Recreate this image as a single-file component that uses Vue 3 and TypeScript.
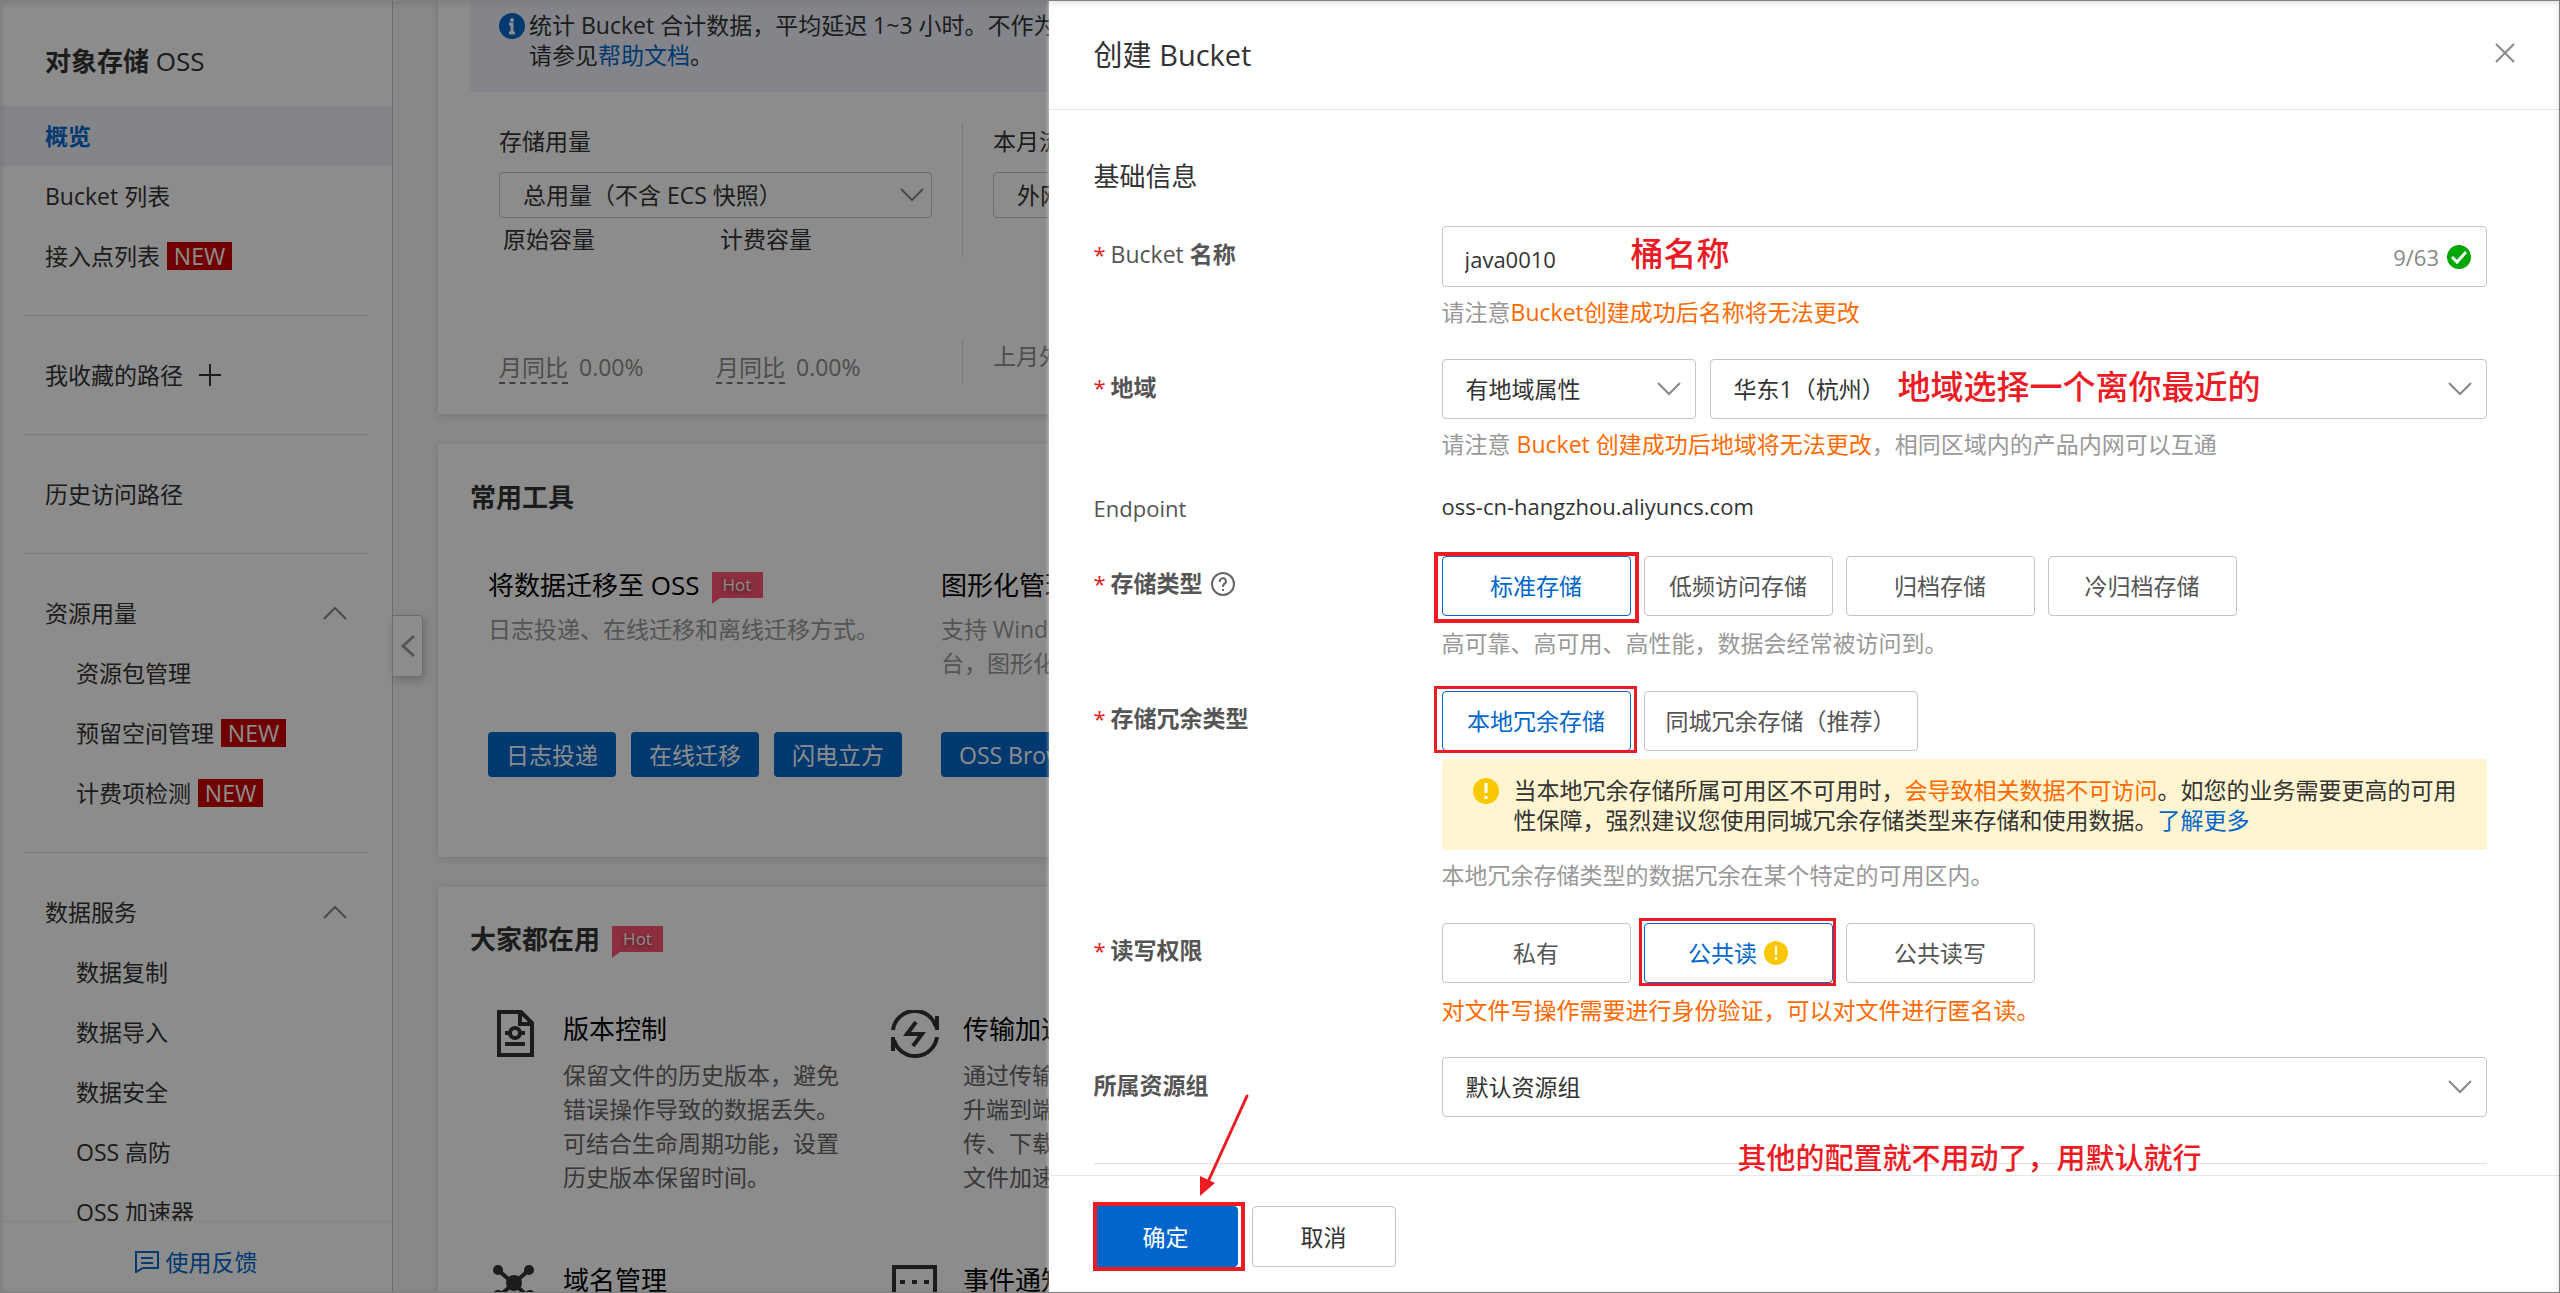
<script setup lang="ts">
import { ref } from 'vue'

interface NavItem {
  text: string
  isNew?: boolean
}
interface NavGroup {
  title: string
  items: NavItem[]
}
interface Feature {
  icon: 'version' | 'transfer' | 'domain' | 'event'
  title: string
  lines: string[]
}

const groups: NavGroup[] = [
  {
    title: '资源用量',
    items: [
      { text: '资源包管理' },
      { text: '预留空间管理', isNew: true },
      { text: '计费项检测', isNew: true },
    ],
  },
  {
    title: '数据服务',
    items: [
      { text: '数据复制' },
      { text: '数据导入' },
      { text: '数据安全' },
      { text: 'OSS 高防' },
      { text: 'OSS 加速器' },
    ],
  },
]

const features: Feature[] = [
  {
    icon: 'version',
    title: '版本控制',
    lines: ['保留文件的历史版本，避免', '错误操作导致的数据丢失。', '可结合生命周期功能，设置', '历史版本保留时间。'],
  },
  {
    icon: 'transfer',
    title: '传输加速',
    lines: ['通过传输', '升端到端', '传、下载', '文件加速'],
  },
  { icon: 'domain', title: '域名管理', lines: [] },
  { icon: 'event', title: '事件通知', lines: [] },
]

const storageTypes = ['标准存储', '低频访问存储', '归档存储', '冷归档存储']
const redundancyTypes = ['本地冗余存储', '同城冗余存储（推荐）']
const aclTypes = ['私有', '公共读', '公共读写']

const bucketName = ref('java0010')
const storage = ref('标准存储')
const redundancy = ref('本地冗余存储')
const acl = ref('公共读')
</script>

<template>
  <div class="page">
    <div class="console">
      <aside class="sidebar">
        <nav class="nav">
          <h1 class="nav-title"><b>对象存储</b> OSS</h1>
          <a class="nav-row active" href="#">概览</a>
          <a class="nav-row" href="#">Bucket 列表</a>
          <a class="nav-row" href="#">接入点列表<span class="new">NEW</span></a>
          <hr class="nav-line" />
          <a class="nav-row" href="#">
            我收藏的路径
            <svg class="plus" width="22" height="22" viewBox="0 0 22 22">
              <path d="M11 0V22M0 11H22" stroke="#333" stroke-width="2" fill="none" />
            </svg>
          </a>
          <hr class="nav-line" />
          <a class="nav-row" href="#">历史访问路径</a>
          <template v-for="group in groups" :key="group.title">
            <hr class="nav-line" />
            <a class="nav-row" href="#">
              {{ group.title }}
              <svg class="fold" width="24" height="14" viewBox="0 0 24 14">
                <path d="M1 13L12 2L23 13" stroke="#888" stroke-width="2" fill="none" />
              </svg>
            </a>
            <a v-for="item in group.items" :key="item.text" class="nav-row child" href="#">
              {{ item.text }}<span v-if="item.isNew" class="new">NEW</span>
            </a>
          </template>
        </nav>
        <a class="feedback" href="#">
          <svg width="24" height="22" viewBox="0 0 24 22">
            <path d="M1 1H23V17H8L1 21Z" stroke="#06c" stroke-width="2" fill="none" />
            <path d="M6 7H18M6 12H18" stroke="#06c" stroke-width="2" fill="none" />
          </svg>
          使用反馈
        </a>
        <button class="collapse" type="button" aria-label="收起">
          <svg width="16" height="24" viewBox="0 0 16 24">
            <path d="M14 2L3 12L14 22" stroke="#999" stroke-width="3" fill="none" />
          </svg>
        </button>
      </aside>

      <main class="main">
        <section class="card card-usage">
          <div class="info">
            <svg class="info-icon" width="26" height="26" viewBox="0 0 26 26">
              <circle cx="13" cy="13" r="13" fill="#06c" />
              <circle cx="13" cy="7" r="2" fill="#fff" />
              <path d="M10 11H13V20M10 20H16" stroke="#fff" stroke-width="3" fill="none" />
            </svg>
            <p>
              统计 Bucket 合计数据，平均延迟 1~3 小时。不作为<br />请参见<a href="#">帮助文档</a>。
            </p>
          </div>
          <div class="usage">
            <div class="usage-col">
              <div class="usage-top">
                <label for="usage-type">存储用量</label>
                <div class="select small">
                  <select id="usage-type"><option>总用量（不含 ECS 快照）</option></select>
                  <svg width="24" height="14" viewBox="0 0 24 14">
                    <path d="M1 1L12 12L23 1" stroke="#888" stroke-width="2" fill="none" />
                  </svg>
                </div>
                <div class="caps"><span>原始容量</span><span>计费容量</span></div>
              </div>
              <div class="usage-foot">
                <span><u>月同比</u>0.00%</span>
                <span><u>月同比</u>0.00%</span>
              </div>
            </div>
            <div class="usage-col second">
              <div class="usage-top">
                <label for="flow-type">本月流量</label>
                <div class="select small">
                  <select id="flow-type"><option>外网</option></select>
                </div>
              </div>
              <div class="usage-foot">上月外网</div>
            </div>
          </div>
        </section>

        <section class="card card-tools">
          <h2>常用工具</h2>
          <div class="tools">
            <div class="tool">
              <h3>将数据迁移至 OSS <span class="hot">Hot</span></h3>
              <p>日志投递、在线迁移和离线迁移方式。</p>
              <div class="tool-actions">
                <button type="button">日志投递</button>
                <button type="button">在线迁移</button>
                <button type="button">闪电立方</button>
              </div>
            </div>
            <div class="tool">
              <h3>图形化管理</h3>
              <p>支持 Windows<br />台，图形化</p>
              <div class="tool-actions">
                <button type="button">OSS Browser</button>
              </div>
            </div>
          </div>
        </section>

        <section class="card card-popular">
          <h2>大家都在用 <span class="hot">Hot</span></h2>
          <div class="features">
            <div v-for="f in features" :key="f.title" class="feature">
              <svg class="feature-icon" width="48" height="48" viewBox="0 0 48 48" fill="none" stroke="#333" stroke-width="4">
                <template v-if="f.icon === 'version'">
                  <path d="M8 2H30L41 13V45H8Z" />
                  <path d="M29 2V14H41" />
                  <circle cx="24" cy="23" r="5" />
                  <path d="M14 23H19M29 23H34M14 34H34" />
                </template>
                <template v-else-if="f.icon === 'transfer'">
                  <path d="M2 20A22 22 0 0 1 45 17" />
                  <path d="M46 6V20" />
                  <path d="M46 27A22 22 0 0 1 3 30" />
                  <path d="M2 27V41" />
                  <path d="M25 12L16 24H31L22 36" />
                </template>
                <template v-else-if="f.icon === 'domain'">
                  <path d="M7 9L38 36M38 9L7 36" />
                  <g fill="#333" stroke="none">
                    <circle cx="23" cy="22" r="8" />
                    <circle cx="7" cy="9" r="5" />
                    <circle cx="38" cy="9" r="5" />
                    <circle cx="7" cy="34" r="5" />
                    <circle cx="39" cy="34" r="5" />
                  </g>
                </template>
                <template v-else>
                  <path d="M3 6H44V44H3Z" />
                  <path d="M9 21H14M21 21H26M33 21H38" />
                </template>
              </svg>
              <div class="feature-text">
                <h3>{{ f.title }}</h3>
                <p v-if="f.lines.length">
                  <span v-for="line in f.lines" :key="line">{{ line }}</span>
                </p>
              </div>
            </div>
          </div>
        </section>
      </main>
    </div>

    <div class="overlay"></div>

    <form class="drawer" @submit.prevent>
      <header class="drawer-head">
        <h2>创建 Bucket</h2>
        <button type="button" class="close" aria-label="关闭">
          <svg width="22" height="22" viewBox="0 0 22 22">
            <path d="M2 2L20 20M20 2L2 20" stroke="#888" stroke-width="2" fill="none" />
          </svg>
        </button>
      </header>

      <div class="drawer-body">
        <h3>基础信息</h3>

        <div class="row">
          <label class="label" for="bucket"><i>*</i>Bucket <b>名称</b></label>
          <div class="field">
            <div class="textbox">
              <input id="bucket" v-model="bucketName" type="text" />
              <span class="count">9/63</span>
              <svg width="24" height="24" viewBox="0 0 24 24">
                <circle cx="12" cy="12" r="12" fill="#00a700" />
                <path d="M5 12L10 17L19 7" stroke="#fff" stroke-width="3" fill="none" />
              </svg>
              <span class="note note-name">桶名称</span>
            </div>
            <p class="help">请注意<em>Bucket创建成功后名称将无法更改</em></p>
          </div>
        </div>

        <div class="row">
          <label class="label" for="region"><i>*</i><b>地域</b></label>
          <div class="field">
            <div class="pair">
              <div class="select narrow">
                <select aria-label="地域属性"><option>有地域属性</option></select>
                <svg width="24" height="14" viewBox="0 0 24 14">
                  <path d="M1 1L12 12L23 1" stroke="#888" stroke-width="2" fill="none" />
                </svg>
              </div>
              <div class="select wide">
                <select id="region"><option>华东1（杭州）</option></select>
                <svg width="24" height="14" viewBox="0 0 24 14">
                  <path d="M1 1L12 12L23 1" stroke="#888" stroke-width="2" fill="none" />
                </svg>
                <span class="note note-region">地域选择一个离你最近的</span>
              </div>
            </div>
            <p class="help">请注意 <em>Bucket 创建成功后地域将无法更改</em>，相同区域内的产品内网可以互通</p>
          </div>
        </div>

        <div class="row plain">
          <span class="label">Endpoint</span>
          <div class="field value">oss-cn-hangzhou.aliyuncs.com</div>
        </div>

        <div class="row" role="radiogroup" aria-labelledby="storage-label">
          <span id="storage-label" class="label">
            <i>*</i><b>存储类型</b>
            <svg class="question" width="24" height="24" viewBox="0 0 24 24" fill="none" stroke="#666">
              <circle cx="12" cy="12" r="11" stroke-width="2" />
              <path d="M9 10A3 3 0 1 1 13 12Q12 13 12 15" stroke-width="2" />
              <path d="M12 17V19" stroke-width="2" />
            </svg>
          </span>
          <div class="field">
            <div class="segments">
              <label v-for="s in storageTypes" :key="s" class="segment" :class="{ on: storage === s }">
                <input v-model="storage" type="radio" name="storage" :value="s" />{{ s }}
                <span v-if="s === '标准存储'" class="mark mark-storage"></span>
              </label>
            </div>
            <p class="help">高可靠、高可用、高性能，数据会经常被访问到。</p>
          </div>
        </div>

        <div class="row" role="radiogroup" aria-labelledby="redundancy-label">
          <span id="redundancy-label" class="label"><i>*</i><b>存储冗余类型</b></span>
          <div class="field">
            <div class="segments">
              <label v-for="r in redundancyTypes" :key="r" class="segment" :class="{ on: redundancy === r }">
                <input v-model="redundancy" type="radio" name="redundancy" :value="r" />{{ r }}
                <span v-if="r === '本地冗余存储'" class="mark mark-redundancy"></span>
              </label>
            </div>
            <div class="alert">
              <svg width="28" height="28" viewBox="0 0 28 28">
                <circle cx="14" cy="14" r="13" fill="#fac800" />
                <path d="M14 6V16M14 19V22" stroke="#fff" stroke-width="3" fill="none" />
              </svg>
              <p>
                当本地冗余存储所属可用区不可用时，<em>会导致相关数据不可访问</em>。如您的业务需要更高的可用性保障，强烈建议您使用同城冗余存储类型来存储和使用数据。<a href="#">了解更多</a>
              </p>
            </div>
            <p class="help">本地冗余存储类型的数据冗余在某个特定的可用区内。</p>
          </div>
        </div>

        <div class="row" role="radiogroup" aria-labelledby="acl-label">
          <span id="acl-label" class="label"><i>*</i><b>读写权限</b></span>
          <div class="field">
            <div class="segments">
              <label v-for="a in aclTypes" :key="a" class="segment" :class="{ on: acl === a }">
                <input v-model="acl" type="radio" name="acl" :value="a" />{{ a }}
                <svg v-if="a === '公共读'" class="warn" width="24" height="24" viewBox="0 0 24 24">
                  <circle cx="12" cy="12" r="12" fill="#fac800" />
                  <path d="M12 5V14M12 16V19" stroke="#fff" stroke-width="2" fill="none" />
                </svg>
                <span v-if="a === '公共读'" class="mark mark-acl"></span>
              </label>
            </div>
            <p class="help"><em>对文件写操作需要进行身份验证，可以对文件进行匿名读。</em></p>
          </div>
        </div>

        <div class="row">
          <label class="label" for="group"><b>所属资源组</b></label>
          <div class="field">
            <div class="select">
              <select id="group"><option>默认资源组</option></select>
              <svg width="24" height="14" viewBox="0 0 24 14">
                <path d="M1 1L12 12L23 1" stroke="#888" stroke-width="2" fill="none" />
              </svg>
            </div>
          </div>
        </div>
        <hr class="body-line" />
      </div>

      <footer class="drawer-foot">
        <span class="confirm-wrap">
          <button type="submit" class="confirm">确定</button>
          <span class="mark mark-confirm"></span>
          <svg class="arrow" width="52" height="104" viewBox="0 0 52 104">
            <path d="M50 2L10 90" stroke="#ed1c24" stroke-width="3" stroke-linecap="round" fill="none" />
            <path d="M3 102L3 82L18 89Z" fill="#ed1c24" />
          </svg>
        </span>
        <button type="button" class="cancel">取消</button>
        <span class="note note-rest">其他的配置就不用动了，用默认就行</span>
      </footer>
    </form>

    <div class="frame"></div>
  </div>
</template>

<style>
body {
  margin: 0;
}
</style>

<style scoped>
* {
  box-sizing: border-box;
}
.page {
  position: relative;
  height: 100vh;
  overflow: hidden;
  color: #333;
  font-family: 'Open Sans', 'Noto Sans CJK SC', sans-serif;
  font-size: 23px;
  line-height: 30px;
}
h1,
h2,
h3,
p {
  margin: 0;
  font-size: 23px;
  font-weight: 400;
}
a {
  color: #06c;
  text-decoration: none;
}
em,
i {
  font-style: normal;
}
em {
  color: #ff6a00;
}
svg {
  display: block;
  flex: none;
}
button,
input,
select {
  font: inherit;
  color: inherit;
  margin: 0;
}
.console {
  display: flex;
  height: 100%;
  background: #f7f7f7;
}

/* Sidebar */
.sidebar {
  position: relative;
  display: flex;
  flex: none;
  flex-direction: column;
  width: 393px;
  background: #fff;
  border-right: 1px solid #c4c6c8;
}
.nav {
  flex: 1;
  min-height: 0;
  overflow: hidden;
}
.nav-title {
  padding: 16px 45px 0;
  font-size: 26px;
  line-height: 90px;
}
.nav-row {
  display: flex;
  align-items: center;
  height: 60px;
  padding: 0 45px;
  color: #333;
}
.nav-row.active {
  color: #06c;
  font-weight: 700;
  background: #eff3f8;
}
.nav-row.child {
  padding-left: 76px;
}
.nav-line {
  height: 1px;
  margin: 29px 23px;
  border: 0;
  background: #dedede;
}
.new {
  width: 65px;
  margin-left: 7px;
  color: #fff;
  line-height: 28px;
  text-align: center;
  background: #c00;
}
.plus {
  margin-left: 16px;
}
.fold {
  margin-left: auto;
}
.feedback {
  display: flex;
  align-items: center;
  justify-content: center;
  gap: 7px;
  height: 72px;
  padding-top: 8px;
  border-top: 1px solid #f0f0f0;
}
.collapse {
  position: absolute;
  top: 615px;
  left: 100%;
  display: flex;
  align-items: center;
  justify-content: center;
  width: 31px;
  height: 62px;
  padding: 0;
  background: #fff;
  border: 1px solid #c4c6c8;
  border-radius: 0 4px 4px 0;
  box-shadow: 2px 3px 8px rgba(0, 0, 0, 0.2);
}

/* Main column */
.main {
  display: flex;
  flex: 1;
  flex-direction: column;
  gap: 30px;
  min-width: 0;
  padding: 0 45px;
}
.card {
  flex: none;
  background: #fff;
  box-shadow: 0 2px 8px rgba(0, 0, 0, 0.12);
}
.card h2 {
  display: flex;
  align-items: center;
  padding: 0 32px;
  font-size: 26px;
  font-weight: 700;
  line-height: 34px;
}
.card h3 {
  display: flex;
  align-items: center;
  color: #000;
  font-size: 26px;
  line-height: 34px;
}
.card-usage {
  height: 414px;
  padding-left: 32px;
}
.info {
  display: flex;
  gap: 4px;
  height: 92px;
  padding: 10px 29px;
  background: #eff3fb;
  border-radius: 0 0 4px 4px;
}
.info-icon {
  margin-top: 3px;
}
.usage {
  display: flex;
  padding: 31px 0 0 29px;
}
.usage-col {
  flex: none;
  width: 464px;
}
.usage-col.second {
  padding-left: 30px;
}
.usage-top {
  height: 135px;
  border-right: 1px dotted #bbb;
}
.usage-top > label {
  display: block;
  padding: 3px 0 16px;
}
.caps {
  display: flex;
  padding: 6px 0 0 4px;
}
.caps span {
  width: 217px;
}
.usage-foot {
  display: flex;
  height: 43px;
  margin-top: 83px;
  color: #8c8c8c;
  border-right: 1px dotted #bbb;
}
.usage-foot span {
  display: flex;
  gap: 11px;
  width: 217px;
  padding-top: 11px;
}
.usage-foot u {
  text-decoration: none;
  border-bottom: 2px dashed #777;
}
.second .usage-top,
.second .usage-foot {
  border: 0;
}
.card-tools {
  height: 413px;
  padding-top: 36px;
}
.tools {
  display: flex;
  padding: 54px 0 0 50px;
}
.tool {
  display: flex;
  flex: none;
  flex-direction: column;
  width: 453px;
}
.tool p {
  height: 130px;
  padding-top: 10px;
  color: #999;
  line-height: 34px;
}
.tool-actions {
  display: flex;
  gap: 15px;
}
.tool-actions button {
  height: 45px;
  padding: 0 18px;
  color: #fff;
  white-space: nowrap;
  background: #06c;
  border: 0;
  border-radius: 4px;
}
.hot {
  position: relative;
  width: 51px;
  height: 26px;
  margin-left: 12px;
  color: #fff;
  font-size: 17px;
  font-weight: 400;
  line-height: 26px;
  text-align: center;
  text-shadow: 0 2px 4px rgba(0, 0, 0, 0.5);
  background: #ff5574;
}
.hot::after {
  position: absolute;
  top: 26px;
  left: 0;
  border-top: 6px solid #ff5574;
  border-right: 8px solid transparent;
  content: '';
}
.card-popular {
  height: 800px;
  padding-top: 35px;
}
.features {
  display: grid;
  grid-template-columns: 400px 400px;
  row-gap: 67px;
  padding: 54px 0 0 53px;
}
.feature {
  display: flex;
  gap: 24px;
}
.feature-text {
  padding-top: 2px;
}
.feature-text p {
  padding-top: 12px;
  color: #666;
  line-height: 34px;
}
.feature-text p span {
  display: block;
  white-space: nowrap;
}

/* Shade over the console */
.overlay {
  position: absolute;
  inset: 0;
  background: rgba(0, 0, 0, 0.45);
}
.frame {
  position: absolute;
  inset: 0;
  border: 1px solid #808080;
  box-shadow: inset 0 2px 6px rgba(0, 0, 0, 0.12);
  pointer-events: none;
}

/* Shared controls */
.select {
  position: relative;
  display: flex;
  align-items: center;
  height: 60px;
}
.select select {
  width: 100%;
  height: 100%;
  padding: 0 50px 0 23px;
  background: #fff;
  border: 1px solid #c0c6cc;
  border-radius: 4px;
  appearance: none;
}
.select svg {
  position: absolute;
  right: 15px;
  pointer-events: none;
}
.select.small {
  width: 433px;
  height: 46px;
}
.select.small svg {
  right: 8px;
}
.select.narrow {
  flex: none;
  width: 254px;
}
.select.wide {
  flex: 1;
}

/* Drawer */
.drawer {
  position: absolute;
  top: 0;
  right: 0;
  bottom: 0;
  display: flex;
  flex-direction: column;
  width: calc(59% + 1px);
  background: #fff;
  box-shadow: 0 0 4px rgba(255, 255, 255, 0.7);
}
.drawer-head {
  display: flex;
  flex: none;
  align-items: center;
  justify-content: space-between;
  height: 110px;
  padding: 0 44px 0 45px;
  border-bottom: 1px solid #e8e8e8;
}
.drawer-head h2 {
  font-size: 29px;
  line-height: 34px;
}
.close {
  padding: 0 0 4px;
  background: none;
  border: 0;
}
.drawer-body {
  display: flex;
  flex: 1;
  flex-direction: column;
  gap: 30px;
  min-height: 0;
  padding: 49px 73px 0 45px;
  overflow: hidden;
}
.drawer-body h3 {
  margin-bottom: 3px;
  font-size: 26px;
  line-height: 34px;
}
.row {
  display: grid;
  flex: none;
  grid-template-columns: 348px 1fr;
}
.label {
  display: flex;
  align-items: flex-start;
  padding-top: 11px;
  color: #555;
  font-weight: 500;
  line-height: 34px;
  white-space: pre;
}
.label i {
  width: 17px;
  color: #e02020;
  font-size: 22px;
  font-weight: 400;
}
.plain .label {
  padding-top: 0;
  font-size: 22px;
}
.plain .value {
  height: 34px;
  font-size: 22px;
}
.question {
  margin: 6px 0 0 8px;
}
.textbox {
  position: relative;
  display: flex;
  align-items: center;
  gap: 8px;
  height: 61px;
  padding: 0 15px 0 22px;
  font-size: 22px;
  border: 1px solid #c0c6cc;
  border-radius: 4px;
}
.textbox input {
  flex: 1;
  min-width: 0;
  padding: 4px 0 0;
  background: none;
  border: 0;
  outline: 0;
}
.count {
  color: #888;
}
.pair {
  display: flex;
  gap: 14px;
}
.help {
  margin-top: 8px;
  color: #999;
  line-height: 34px;
}
.segments {
  display: flex;
  gap: 13px;
  padding: 1px 0 2px;
}
.segment {
  position: relative;
  display: flex;
  align-items: center;
  justify-content: center;
  min-width: 189px;
  height: 60px;
  padding: 0 21px;
  color: #555;
  border: 1px solid #c0c6cc;
  border-radius: 4px;
}
.segment.on {
  color: #06c;
  border-color: #06c;
}
.segment input {
  position: absolute;
  opacity: 0;
}
.warn {
  margin-left: 7px;
}
.alert {
  display: flex;
  gap: 14px;
  margin-top: 6px;
  padding: 16px 28px 15px 30px;
  background: #fff5d1;
  border-radius: 4px;
}
.alert svg {
  margin-top: 2px;
}
.body-line {
  width: 100%;
  height: 1px;
  margin: 16px 0 0;
  border: 0;
  background: #e0e0e0;
}
.drawer-foot {
  position: relative;
  display: flex;
  flex: none;
  align-items: flex-start;
  gap: 14px;
  height: 118px;
  padding: 30px 45px 0;
  border-top: 1px solid #e8e8e8;
}
.confirm-wrap {
  position: relative;
  display: flex;
}
.confirm,
.cancel {
  width: 144px;
  height: 61px;
  background: #fff;
  border: 1px solid #c0c6cc;
  border-radius: 4px;
}
.confirm {
  color: #fff;
  background: #06c;
  border-color: #06c;
}

/* Hand-made red annotations */
.mark {
  position: absolute;
  border: 3px solid #ed1c24;
  pointer-events: none;
}
.mark-storage {
  inset: -5px -9px -8px;
  border-width: 4px;
}
.mark-redundancy {
  inset: -6px -7px -3px -9px;
}
.mark-acl {
  inset: -6px -4px -4px -6px;
}
.mark-confirm {
  inset: -4px -7px -4px -1px;
  border-width: 4px;
}
.arrow {
  position: absolute;
  top: -112px;
  left: 103px;
  pointer-events: none;
}
.note {
  position: absolute;
  color: #ed1c24;
  font-size: 33px;
  font-weight: 500;
  line-height: 40px;
  white-space: nowrap;
  pointer-events: none;
}
.note-name {
  top: 7px;
  left: 188px;
}
.note-region {
  top: 8px;
  left: 188px;
}
.note-rest {
  top: -38px;
  left: 689px;
  font-size: 29px;
}
</style>
